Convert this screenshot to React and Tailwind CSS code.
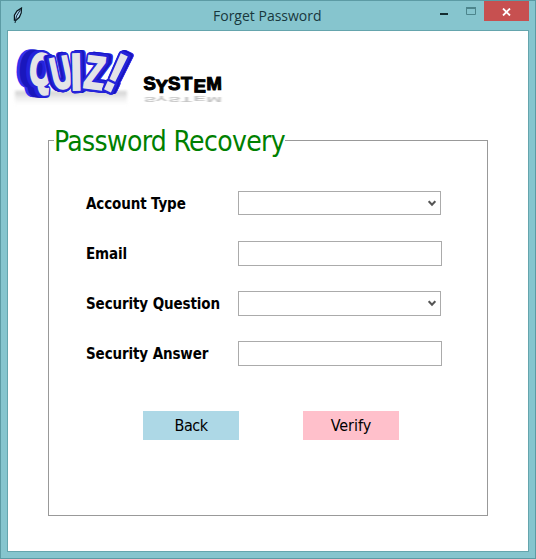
import React from "react";

const quiz = [
  { c: "Q", t: "translate(40 85) rotate(5) scale(.74 1.12)", d: -12, o: 6.5, f: 2.6 },
  { c: "U", t: "translate(64.5 88) rotate(-12) scale(.7 1.12)", d: -4, o: 6.5, f: 2.2 },
  { c: "I", t: "translate(76.5 90) rotate(-1) scale(1.05 1.3)", d: 4, o: 5, f: 1.6 },
  { c: "Z", t: "translate(93 88.5) rotate(7) scale(.84 1.16)", d: 5, o: 6, f: 1.8 },
  { c: "!", t: "translate(108 90) rotate(25) scale(1.1 1.38)", d: 4, o: 5, f: 1.2 },
];

const system = [
  ["S", 143.8, 90, -3], ["Y", 155.3, 92.5, 2], ["S", 168.3, 90, -2],
  ["T", 181, 90, 0], ["E", 193.5, 92.3, 1], ["M", 206.5, 90, -1],
];

function Logo() {
  return (
    <svg className="block h-[86px] w-[232px]" viewBox="8 31 232 86" fontFamily="Liberation Sans, Arial, sans-serif" fontWeight="700">
      <defs>
        <linearGradient id="shade" x1="0" y1="0" x2="0" y2="1">
          <stop offset="0" stopColor="#909090" stopOpacity=".45" />
          <stop offset="1" stopColor="#cccccc" stopOpacity="0" />
        </linearGradient>
        <filter id="soft"><feGaussianBlur stdDeviation="1.6" /></filter>
        <filter id="mirror"><feGaussianBlur stdDeviation="1.1" /></filter>
      </defs>
      <rect x="15" y="91" width="112" height="14" fill="url(#shade)" filter="url(#soft)" />
      {quiz.map((l) => (
        <g key={l.c} textAnchor="middle" fontSize="40">
          {Array.from({ length: 12 }, (_, i) => {
            const back = 1 - i / 11;
            const tone = i < 3 ? "#3331ee" : i < 9 ? "#1a17bd" : "#2523da";
            return (
              <g key={i} transform={`translate(${l.d * back} ${-0.8 * back})`}>
                <text transform={l.t} fill={tone} stroke={tone} strokeWidth={l.o} strokeLinejoin="round">{l.c}</text>
              </g>
            );
          })}
          <text transform={l.t} fill="#e4e4e7" stroke="#e4e4e7" strokeWidth={l.f}>{l.c}</text>
        </g>
      ))}
      {system.map(([c, x, y, r], i) => (
        <text key={i} transform={`translate(${x} ${y}) rotate(${r})`} fontSize="18.5" stroke="#000" strokeWidth="1.1">{c}</text>
      ))}
      <g transform="translate(0 130) scale(1 -.36)" opacity=".24" filter="url(#mirror)">
        {system.map(([c, x, y], i) => <text key={i} x={x} y={y + 3} fontSize="18.5">{c}</text>)}
      </g>
    </svg>
  );
}

function Field({ label, select, boxHeight = "h-[25px]" }) {
  return (
    <div className="flex h-[50px] items-start">
      <label className="flex h-[25px] w-[152px] items-center whitespace-nowrap pt-px text-[15px] font-bold tracking-[-0.12px] text-black">
        {label}
      </label>
      <div className={`flex items-center justify-end border border-[#ababab] bg-white ${boxHeight} ${select ? "w-[203px] pr-1" : "w-[204px]"}`}>
        {select && (
          <svg className="h-[7px] w-[8px]" viewBox="0 0 8 7" fill="none" stroke="#555" strokeWidth="2"><path d="M.7 1.2 4 4.7 7.3 1.2" /></svg>
        )}
      </div>
    </div>
  );
}

export default function App() {
  return (
    <div className="flex h-[559px] w-[536px] flex-col border border-[#5c9ba4] bg-[#86c5ce] px-[6px] pb-[6px] font-['DejaVu_Sans_Condensed','DejaVu_Sans',sans-serif] [font-stretch:condensed]">
      <header className="flex h-[29px] shrink-0 items-start">
        <svg className="ml-[5px] mt-[6px] h-[17px] w-[12px] shrink-0" viewBox="0 0 12 17">
          <path d="M9.5 1 5 4 2.4 8.2v5l1.5.2 3.4-3.1 1.9-4.4Z" fill="#a9d6ee" stroke="#08151b" strokeWidth="1.2" />
          <path d="M8.6 2.5 4.5 9 3 16" fill="none" stroke="#102230" strokeWidth="1" />
        </svg>
        <h1 className="ml-[189px] mt-[5px] w-[225px] shrink-0 whitespace-nowrap font-['Open_Sans','Noto_Sans',sans-serif] text-[14px] leading-[20px] text-[#18383d] [font-stretch:normal]">Forget Password</h1>
        <svg className="h-[20px] w-[46px] shrink-0" viewBox="0 0 46 20" fill="none">
          <path d="M2 13h8" stroke="#142d31" strokeWidth="2" />
          <path d="M28 7h10" stroke="#4c858c" strokeWidth="2" />
          <path d="M28.5 7v6.5h9V7" stroke="#4c858c" />
        </svg>
        <div className="flex h-5 w-[45px] shrink-0 items-center justify-center bg-[#c75050]">
          <svg className="mt-px h-[8px] w-[9px]" viewBox="0 0 9 8" stroke="#fff" strokeWidth="1.8"><path d="m1 .5 7 7M8 .5l-7 7" /></svg>
        </div>
      </header>
      <main className="h-[522px] border border-[#65a5ad] bg-white">
        <Logo />
        <fieldset className="ml-[40px] h-[399px] w-[440px] border border-[#999] pl-[37px] pt-[28px]">
          <legend className="-ml-[32px] h-[46px] whitespace-nowrap pt-[4px] text-[28px] leading-[42px] tracking-[-0.66px] text-[#008000]">Password Recovery</legend>
          <Field label="Account Type" select boxHeight="h-[24px]" />
          <Field label="Email" />
          <Field label="Security Question" select />
          <Field label="Security Answer" />
          <div className="ml-[57px] mt-5 flex gap-16 text-[16px] text-black">
            <button className="h-[29px] w-24 bg-[#add8e6] tracking-[-0.5px]">Back</button>
            <button className="h-[29px] w-24 bg-[#ffc0cb] tracking-[0px]">Verify</button>
          </div>
        </fieldset>
      </main>
    </div>
  );
}
